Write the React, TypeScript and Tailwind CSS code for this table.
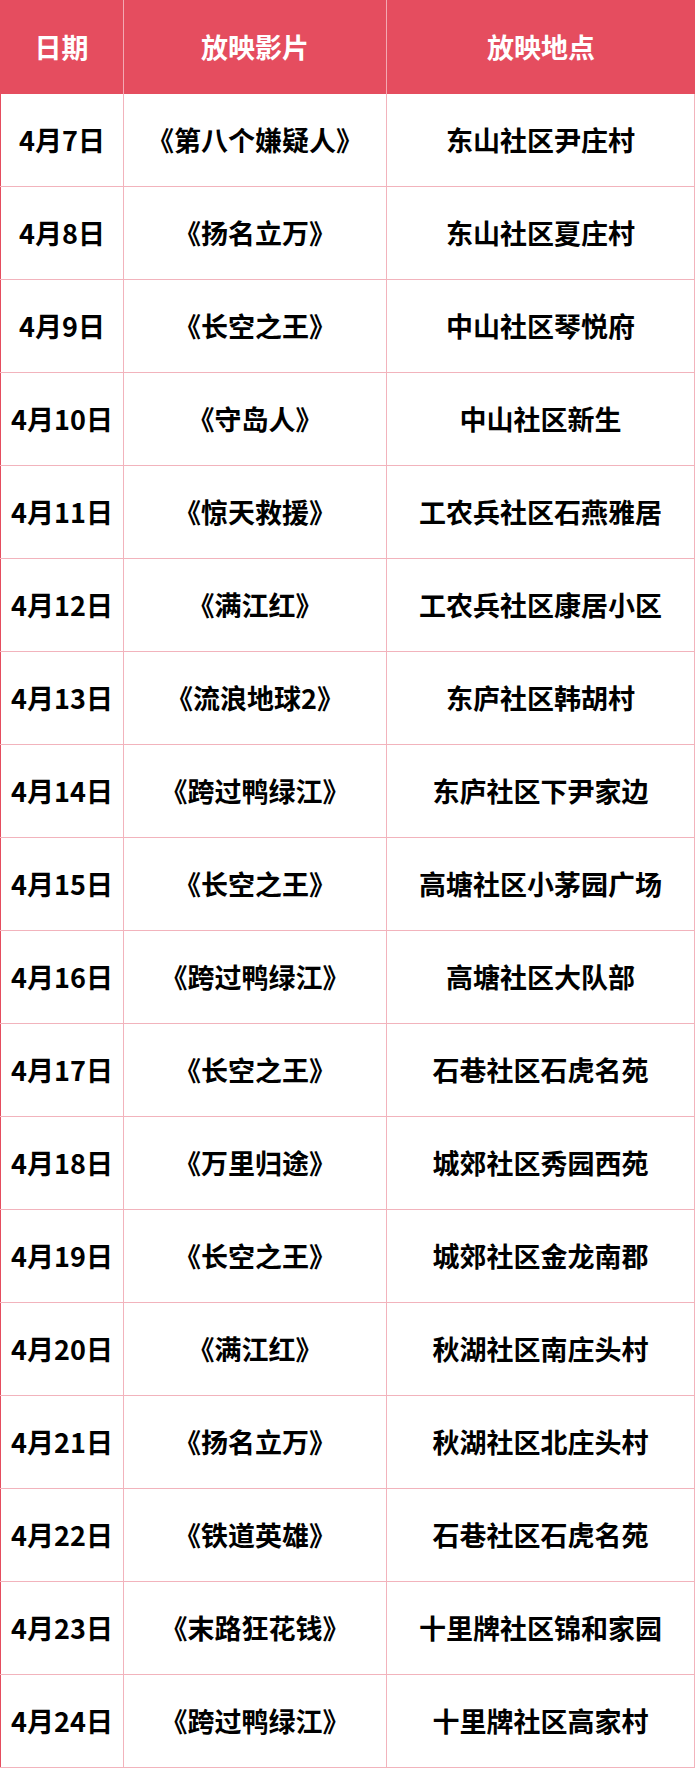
import React from 'react';

const rows: [string, string, string][] = [
  ['4月7日', '《第八个嫌疑人》', '东山社区尹庄村'],
  ['4月8日', '《扬名立万》', '东山社区夏庄村'],
  ['4月9日', '《长空之王》', '中山社区琴悦府'],
  ['4月10日', '《守岛人》', '中山社区新生'],
  ['4月11日', '《惊天救援》', '工农兵社区石燕雅居'],
  ['4月12日', '《满江红》', '工农兵社区康居小区'],
  ['4月13日', '《流浪地球2》', '东庐社区韩胡村'],
  ['4月14日', '《跨过鸭绿江》', '东庐社区下尹家边'],
  ['4月15日', '《长空之王》', '高塘社区小茅园广场'],
  ['4月16日', '《跨过鸭绿江》', '高塘社区大队部'],
  ['4月17日', '《长空之王》', '石巷社区石虎名苑'],
  ['4月18日', '《万里归途》', '城郊社区秀园西苑'],
  ['4月19日', '《长空之王》', '城郊社区金龙南郡'],
  ['4月20日', '《满江红》', '秋湖社区南庄头村'],
  ['4月21日', '《扬名立万》', '秋湖社区北庄头村'],
  ['4月22日', '《铁道英雄》', '石巷社区石虎名苑'],
  ['4月23日', '《末路狂花钱》', '十里牌社区锦和家园'],
  ['4月24日', '《跨过鸭绿江》', '十里牌社区高家村'],
];

const font = { fontFamily: '"Noto Sans CJK SC", "Noto Sans", sans-serif' };

const App = () => {
  return (
    <div className="w-[695px] bg-white" style={font}>
      <div className="grid grid-cols-[124px_263px_1fr] h-[94px] bg-[#e54d5f] text-white text-[27px] font-bold">
        <div className="flex items-center justify-center border-r border-[#f3a9b3]">日期</div>
        <div className="flex items-center justify-center border-r border-[#f3a9b3]">放映影片</div>
        <div className="flex items-center justify-center">放映地点</div>
      </div>
      {rows.map(([date, film, place]) => (
        <div
          key={date}
          className="grid grid-cols-[124px_263px_1fr] h-[93px] border-b border-[#f2b3bc] text-black text-[27px] font-bold"
        >
          <div className="flex items-center justify-center border-l border-l-[#e54d5f] border-r border-r-[#f2b3bc]">
            {date}
          </div>
          <div className="flex items-center justify-center border-r border-[#f2b3bc]">{film}</div>
          <div className="flex items-center justify-center border-r border-[#f2b3bc]">{place}</div>
        </div>
      ))}
    </div>
  );
};

export default App;
